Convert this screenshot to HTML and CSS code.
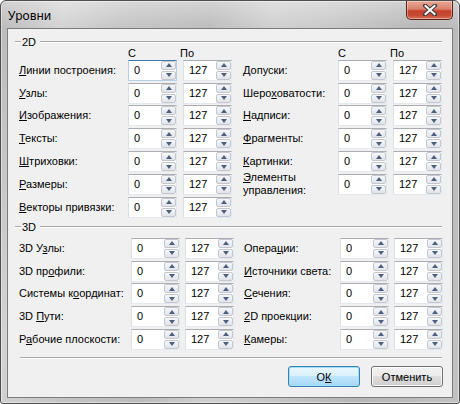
FILE: index.html
```html
<!DOCTYPE html>
<html lang="ru">
<head>
  <meta charset="UTF-8">
  <title>Уровни</title>
  <link rel="stylesheet" href="styles.css">
</head>
<body>
  <div class="window">
    <div class="titlebar">
      <span class="title">Уровни</span>
      <div class="close">
        <svg width="14" height="12" viewBox="0 0 14 12">
          <path d="M2 1.5 L12 10.5 M12 1.5 L2 10.5" stroke="#3a3a3a" stroke-width="4" stroke-linecap="square"/>
          <path d="M2.5 2 L11.5 10 M11.5 2 L2.5 10" stroke="#ffffff" stroke-width="2" stroke-linecap="square"/>
        </svg>
      </div>
    </div>

    <div class="client">
      <div class="group-head"><span class="lead"></span><span class="cap">2D</span><span class="rule"></span></div>
      <div class="grid grid-2d">
        <span></span><span class="colhead">С</span><span class="colhead ph">По</span>
        <span></span><span class="colhead">С</span><span class="colhead ph">По</span>

        <label><u>Л</u>инии построения:</label>
        <div class="spin focus"><span class="val">0</span><span class="arrows"><i class="up"></i><i class="down"></i></span></div>
        <div class="spin"><span class="val">127</span><span class="arrows"><i class="up"></i><i class="down"></i></span></div>
        <label><u>Д</u>опуски:</label>
        <div class="spin"><span class="val">0</span><span class="arrows"><i class="up"></i><i class="down"></i></span></div>
        <div class="spin"><span class="val">127</span><span class="arrows"><i class="up"></i><i class="down"></i></span></div>

        <label><u>У</u>злы:</label>
        <div class="spin"><span class="val">0</span><span class="arrows"><i class="up"></i><i class="down"></i></span></div>
        <div class="spin"><span class="val">127</span><span class="arrows"><i class="up"></i><i class="down"></i></span></div>
        <label>Шеро<u>х</u>оватости:</label>
        <div class="spin"><span class="val">0</span><span class="arrows"><i class="up"></i><i class="down"></i></span></div>
        <div class="spin"><span class="val">127</span><span class="arrows"><i class="up"></i><i class="down"></i></span></div>

        <label><u>И</u>зображения:</label>
        <div class="spin"><span class="val">0</span><span class="arrows"><i class="up"></i><i class="down"></i></span></div>
        <div class="spin"><span class="val">127</span><span class="arrows"><i class="up"></i><i class="down"></i></span></div>
        <label><u>Н</u>адписи:</label>
        <div class="spin"><span class="val">0</span><span class="arrows"><i class="up"></i><i class="down"></i></span></div>
        <div class="spin"><span class="val">127</span><span class="arrows"><i class="up"></i><i class="down"></i></span></div>

        <label><u>Т</u>ексты:</label>
        <div class="spin"><span class="val">0</span><span class="arrows"><i class="up"></i><i class="down"></i></span></div>
        <div class="spin"><span class="val">127</span><span class="arrows"><i class="up"></i><i class="down"></i></span></div>
        <label><u>Ф</u>рагменты:</label>
        <div class="spin"><span class="val">0</span><span class="arrows"><i class="up"></i><i class="down"></i></span></div>
        <div class="spin"><span class="val">127</span><span class="arrows"><i class="up"></i><i class="down"></i></span></div>

        <label><u>Ш</u>триховки:</label>
        <div class="spin"><span class="val">0</span><span class="arrows"><i class="up"></i><i class="down"></i></span></div>
        <div class="spin"><span class="val">127</span><span class="arrows"><i class="up"></i><i class="down"></i></span></div>
        <label><u>К</u>артинки:</label>
        <div class="spin"><span class="val">0</span><span class="arrows"><i class="up"></i><i class="down"></i></span></div>
        <div class="spin"><span class="val">127</span><span class="arrows"><i class="up"></i><i class="down"></i></span></div>

        <label><u>Р</u>азмеры:</label>
        <div class="spin"><span class="val">0</span><span class="arrows"><i class="up"></i><i class="down"></i></span></div>
        <div class="spin"><span class="val">127</span><span class="arrows"><i class="up"></i><i class="down"></i></span></div>
        <label class="wrap"><u>Э</u>лементы<br>управления:</label>
        <div class="spin"><span class="val">0</span><span class="arrows"><i class="up"></i><i class="down"></i></span></div>
        <div class="spin"><span class="val">127</span><span class="arrows"><i class="up"></i><i class="down"></i></span></div>

        <label><u>В</u>екторы привязки:</label>
        <div class="spin"><span class="val">0</span><span class="arrows"><i class="up"></i><i class="down"></i></span></div>
        <div class="spin"><span class="val">127</span><span class="arrows"><i class="up"></i><i class="down"></i></span></div>
      </div>

      <div class="group-head head-3d"><span class="lead"></span><span class="cap">3D</span><span class="rule"></span></div>
      <div class="grid grid-3d">
        <label>3D У<u>з</u>лы:</label>
        <div class="spin"><span class="val">0</span><span class="arrows"><i class="up"></i><i class="down"></i></span></div>
        <div class="spin"><span class="val">127</span><span class="arrows"><i class="up"></i><i class="down"></i></span></div>
        <label>Опера<u>ц</u>ии:</label>
        <div class="spin"><span class="val">0</span><span class="arrows"><i class="up"></i><i class="down"></i></span></div>
        <div class="spin"><span class="val">127</span><span class="arrows"><i class="up"></i><i class="down"></i></span></div>

        <label>3D пр<u>о</u>фили:</label>
        <div class="spin"><span class="val">0</span><span class="arrows"><i class="up"></i><i class="down"></i></span></div>
        <div class="spin"><span class="val">127</span><span class="arrows"><i class="up"></i><i class="down"></i></span></div>
        <label><u>И</u>сточники света:</label>
        <div class="spin"><span class="val">0</span><span class="arrows"><i class="up"></i><i class="down"></i></span></div>
        <div class="spin"><span class="val">127</span><span class="arrows"><i class="up"></i><i class="down"></i></span></div>

        <label>Системы к<u>о</u>ординат:</label>
        <div class="spin"><span class="val">0</span><span class="arrows"><i class="up"></i><i class="down"></i></span></div>
        <div class="spin"><span class="val">127</span><span class="arrows"><i class="up"></i><i class="down"></i></span></div>
        <label><u>С</u>ечения:</label>
        <div class="spin"><span class="val">0</span><span class="arrows"><i class="up"></i><i class="down"></i></span></div>
        <div class="spin"><span class="val">127</span><span class="arrows"><i class="up"></i><i class="down"></i></span></div>

        <label>3D <u>П</u>ути:</label>
        <div class="spin"><span class="val">0</span><span class="arrows"><i class="up"></i><i class="down"></i></span></div>
        <div class="spin"><span class="val">127</span><span class="arrows"><i class="up"></i><i class="down"></i></span></div>
        <label><u>2</u>D проекции:</label>
        <div class="spin"><span class="val">0</span><span class="arrows"><i class="up"></i><i class="down"></i></span></div>
        <div class="spin"><span class="val">127</span><span class="arrows"><i class="up"></i><i class="down"></i></span></div>

        <label>Р<u>а</u>бочие плоскости:</label>
        <div class="spin"><span class="val">0</span><span class="arrows"><i class="up"></i><i class="down"></i></span></div>
        <div class="spin"><span class="val">127</span><span class="arrows"><i class="up"></i><i class="down"></i></span></div>
        <label><u>К</u>амеры:</label>
        <div class="spin"><span class="val">0</span><span class="arrows"><i class="up"></i><i class="down"></i></span></div>
        <div class="spin"><span class="val">127</span><span class="arrows"><i class="up"></i><i class="down"></i></span></div>
      </div>

      <div class="separator"></div>

      <div class="buttons">
        <button class="btn default">О<u>К</u></button>
        <button class="btn">Отменить</button>
      </div>
    </div>
  </div>
</body>
</html>
```

FILE: styles.css
```css
body {
  margin: 0;
  background: #ffffff;
  font-family: "Liberation Sans", Arial, sans-serif;
  font-size: 11px;
  color: #000;
}

.window {
  width: 460px;
  height: 404px;
  box-sizing: border-box;
  border: 1px solid #4e4e4e;
  border-radius: 6px 6px 3px 3px;
  padding: 0 6px 5px 6px;
  background:
    linear-gradient(to bottom, rgba(255,255,255,0.35), rgba(255,255,255,0) 28px),
    linear-gradient(100deg, #b9b9b9 0%, #d3d3d3 12%, #c4c4c4 24%, #bcbcbc 40%, #cfcfcf 52%, #c9c9c9 62%, #b6b6b6 80%, #c2c2c2 100%);
  box-shadow: inset 0 0 0 1px rgba(255,255,255,0.45);
  display: flex;
  flex-direction: column;
}

.titlebar {
  height: 27px;
  display: flex;
  justify-content: space-between;
  align-items: flex-start;
}

.title {
  font-family: "Noto Sans", sans-serif;
  font-size: 12px;
  padding: 6px 0 0 1px;
  color: #000;
}

.close {
  width: 47px;
  height: 19px;
  box-sizing: border-box;
  border: 1px solid #5b2418;
  border-top: none;
  border-radius: 0 0 5px 5px;
  background: linear-gradient(to bottom, #e8a995 0%, #d9806c 45%, #c5412c 55%, #c64a33 80%, #d8775c 100%);
  box-shadow: inset 0 0 0 1px rgba(255,255,255,0.35);
  display: flex;
  align-items: center;
  justify-content: center;
}

.client {
  flex: 1;
  border: 1px solid #7d7d7d;
  background: #f0f0f0;
  padding: 7px 0 0 0;
}

.group-head {
  height: 12px;
  display: flex;
  align-items: center;
  padding: 0 10px 0 7px;
}

.group-head .lead {
  width: 6px;
  height: 0;
  border-top: 1px solid #a8a8a8;
  border-bottom: 1px solid #ffffff;
}

.group-head .cap {
  padding: 0 4px 0 1px;
  line-height: 12px;
}

.group-head .rule {
  flex: 1;
  height: 0;
  border-top: 1px solid #a8a8a8;
  border-bottom: 1px solid #ffffff;
}

.head-3d {
  margin-top: 3px;
}

.grid {
  display: grid;
  align-items: center;
  row-gap: 1.83px;
  padding-left: 11px;
}

.grid-2d {
  grid-template-columns: 109px 55px 60px 95px 55px 49px;
  grid-template-rows: 10px repeat(7, 21px);
}

.grid-3d {
  margin-top: 5px;
  grid-template-columns: 112px 54px 59px 96px 54px 49px;
  grid-auto-rows: 21px;
  row-gap: 1.75px;
}

.colhead {
  line-height: 10px;
}

.colhead.ph {
  margin-left: -3px;
}

label {
  line-height: 13px;
  white-space: nowrap;
}

.spin {
  width: 49px;
  height: 21px;
  box-sizing: border-box;
  border: 1px solid #e3e9ef;
  border-top-color: #abadb3;
  border-left-color: #dbdfe6;
  background: #ffffff;
  display: flex;
}

.spin.focus {
  border-color: #b5cfe7;
  border-top-color: #3d7bad;
}

.spin .val {
  flex: 1;
  padding-left: 5px;
  line-height: 19px;
}

.spin .arrows {
  width: 15px;
  display: flex;
  flex-direction: column;
  gap: 1px;
}

.spin .arrows i {
  flex: 1;
  box-sizing: border-box;
  border: 1px solid #c3c7cd;
  border-radius: 2px;
  background: linear-gradient(to bottom, #f6f7f9, #e1e4ea);
  display: flex;
  align-items: center;
  justify-content: center;
}

.spin .arrows i::after {
  content: "";
  width: 0;
  height: 0;
  border-left: 3.5px solid transparent;
  border-right: 3.5px solid transparent;
}

.spin .arrows .up::after {
  border-bottom: 4px solid #4d5f7d;
}

.spin .arrows .down::after {
  border-top: 4px solid #4d5f7d;
}

.separator {
  margin: 7.5px 10px 0 12px;
  border-top: 1px solid #a8a8a8;
  border-bottom: 1px solid #ffffff;
}

.buttons {
  display: flex;
  justify-content: flex-end;
  gap: 11px;
  margin-top: 7px;
  padding-right: 9px;
}

.btn {
  width: 72px;
  height: 21px;
  font-family: "Liberation Sans", Arial, sans-serif;
  font-size: 11px;
  color: #000;
  border: 1px solid #707070;
  border-radius: 3px;
  background: linear-gradient(to bottom, #f2f2f2 0%, #ebebeb 49%, #dddddd 50%, #cfcfcf 100%);
  box-shadow: inset 0 0 0 1px rgba(255,255,255,0.8);
  padding: 0;
}

.btn.default {
  border-color: #3c7fb1;
  background: linear-gradient(to bottom, #eaf6fd 0%, #d9f0fc 49%, #bee6fd 50%, #a7d9f5 100%);
  box-shadow: inset 0 0 0 1px #9ee0fa;
}
```
